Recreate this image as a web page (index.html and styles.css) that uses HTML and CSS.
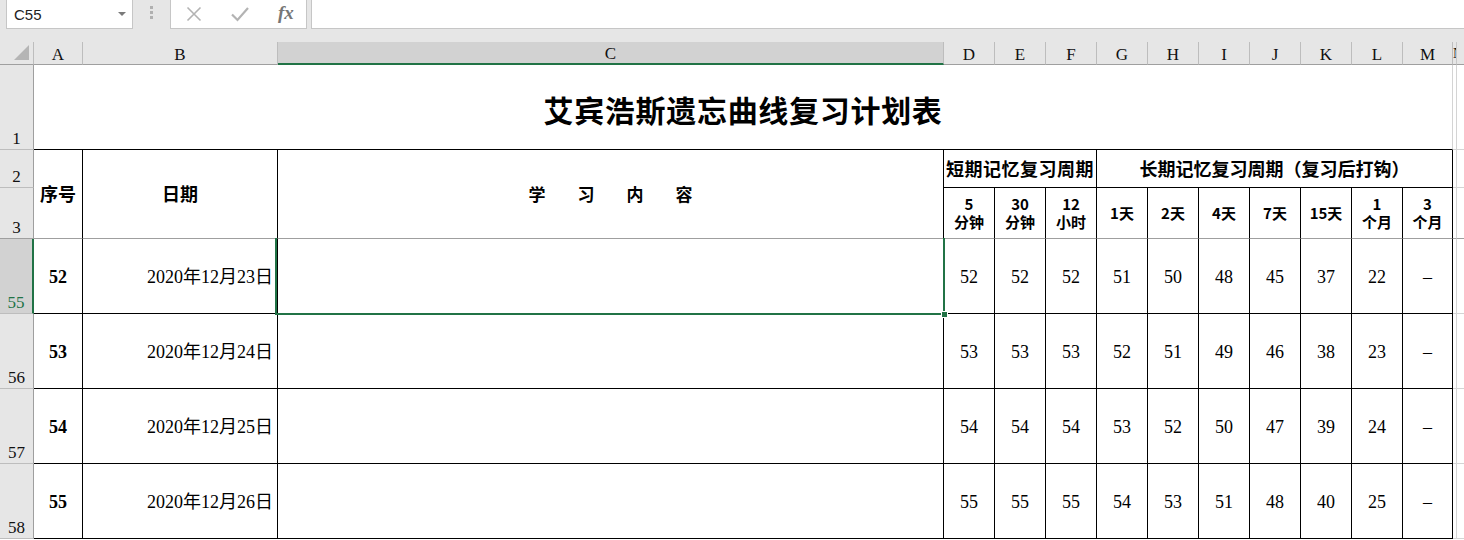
FILE: index.html
```html
<!DOCTYPE html>
<html lang="zh">
<head>
<meta charset="utf-8">
<title>艾宾浩斯遗忘曲线复习计划表</title>
<link rel="stylesheet" href="styles.css">
</head>
<body>
<div class="fbar">
  <div class="namebox"><span class="ref">C55</span><span class="caret"></span></div>
  <div class="dots"><i></i><i></i><i></i></div>
  <div class="btns">
    <svg class="ic-x" width="16" height="16" viewBox="0 0 16 16"><path d="M1.5 1.5L14.5 14.5M14.5 1.5L1.5 14.5" stroke="#b3b3b3" stroke-width="1.6" fill="none"/></svg>
    <svg class="ic-ok" width="18" height="16" viewBox="0 0 18 16"><path d="M1 8.5L6.5 14L17 2" stroke="#b3b3b3" stroke-width="2.2" fill="none"/></svg>
    <span class="fx">fx</span>
  </div>
  <div class="input"></div>
</div>
<div class="band"></div>
<div class="sheet">
  <!-- column headers -->
  <div class="corner"><span class="tri"></span></div>
  <div class="ch">A</div>
  <div class="ch">B</div>
  <div class="ch ch-sel">C</div>
  <div class="ch">D</div>
  <div class="ch">E</div>
  <div class="ch">F</div>
  <div class="ch">G</div>
  <div class="ch">H</div>
  <div class="ch">I</div>
  <div class="ch">J</div>
  <div class="ch">K</div>
  <div class="ch">L</div>
  <div class="ch">M</div>
  <div class="ch ch-n"><span class="nclip">N</span></div>
  <div class="ch ch-o"></div>

  <!-- row 1 -->
  <div class="rh">1</div>
  <div class="title">艾宾浩斯遗忘曲线复习计划表</div>
  <div class="gn"></div>
  <div class="go"></div>

  <!-- row 2 -->
  <div class="rh">2</div>
  <div class="hd hd-a">序号</div>
  <div class="hd hd-b">日期</div>
  <div class="hd hd-c"><span>学</span><span>习</span><span>内</span><span>容</span></div>
  <div class="hd hd-short">短期记忆复习周期</div>
  <div class="hd hd-long">长期记忆复习周期（复习后打钩）</div>
  <div class="gn"></div>
  <div class="go"></div>

  <!-- row 3 -->
  <div class="rh rh-frz">3</div>
  <div class="sub"><span>5</span><span>分钟</span></div>
  <div class="sub"><span>30</span><span>分钟</span></div>
  <div class="sub"><span>12</span><span>小时</span></div>
  <div class="sub"><span>1天</span></div>
  <div class="sub"><span>2天</span></div>
  <div class="sub"><span>4天</span></div>
  <div class="sub"><span>7天</span></div>
  <div class="sub"><span>15天</span></div>
  <div class="sub"><span>1</span><span>个月</span></div>
  <div class="sub"><span>3</span><span>个月</span></div>
  <div class="gn frz"></div>
  <div class="go frz"></div>

  <!-- row 55 -->
  <div class="rh rh-sel">55</div>
  <div class="c idx">52</div>
  <div class="c date">2020年12月23日</div>
  <div class="c cc"><div class="sel"><span class="handle"></span></div></div>
  <div class="c">52</div><div class="c">52</div><div class="c">52</div>
  <div class="c">51</div><div class="c">50</div><div class="c">48</div><div class="c">45</div><div class="c">37</div><div class="c">22</div><div class="c">–</div>
  <div class="gn"></div>
  <div class="go"></div>

  <!-- row 56 -->
  <div class="rh">56</div>
  <div class="c idx">53</div>
  <div class="c date">2020年12月24日</div>
  <div class="c cc"></div>
  <div class="c">53</div><div class="c">53</div><div class="c">53</div>
  <div class="c">52</div><div class="c">51</div><div class="c">49</div><div class="c">46</div><div class="c">38</div><div class="c">23</div><div class="c">–</div>
  <div class="gn"></div>
  <div class="go"></div>

  <!-- row 57 -->
  <div class="rh">57</div>
  <div class="c idx">54</div>
  <div class="c date">2020年12月25日</div>
  <div class="c cc"></div>
  <div class="c">54</div><div class="c">54</div><div class="c">54</div>
  <div class="c">53</div><div class="c">52</div><div class="c">50</div><div class="c">47</div><div class="c">39</div><div class="c">24</div><div class="c">–</div>
  <div class="gn"></div>
  <div class="go"></div>

  <!-- row 58 -->
  <div class="rh">58</div>
  <div class="c idx">55</div>
  <div class="c date">2020年12月26日</div>
  <div class="c cc"></div>
  <div class="c">55</div><div class="c">55</div><div class="c">55</div>
  <div class="c">54</div><div class="c">53</div><div class="c">51</div><div class="c">48</div><div class="c">40</div><div class="c">25</div><div class="c">–</div>
  <div class="gn"></div>
  <div class="go"></div>
</div>
</body>
</html>
```
FILE: styles.css
```css
* { box-sizing: border-box; }
html, body { margin: 0; padding: 0; }
body {
  width: 1464px;
  height: 540px;
  overflow: hidden;
  background: #ffffff;
  font-family: "Liberation Serif", "Noto Sans CJK SC", serif;
  color: #000;
}

/* ---------- formula bar ---------- */
.fbar {
  display: flex;
  height: 29px;
  background: #e6e6e6;
  align-items: stretch;
}
.namebox {
  margin-left: 6px;
  width: 127px;
  background: #fff;
  border: 1px solid #c6c6c6;
  border-top: 0;
  display: flex;
  align-items: center;
  justify-content: space-between;
  padding: 0 6px 0 7px;
  font-family: "Liberation Sans", Arial, sans-serif;
  font-size: 15px;
  color: #222;
}
.caret {
  width: 0; height: 0;
  border-left: 4px solid transparent;
  border-right: 4px solid transparent;
  border-top: 4px solid #7a7a7a;
}
.dots {
  width: 37px;
  display: flex;
  flex-direction: column;
  align-items: center;
  justify-content: center;
  gap: 2px;
  padding-bottom: 4px;
}
.dots i {
  display: block;
  width: 3px; height: 3px;
  background: #b0b0b0;
}
.btns {
  width: 137px;
  background: #fff;
  border: 1px solid #c6c6c6;
  border-top: 0;
  display: flex;
  align-items: center;
  padding-left: 15px;
}
.ic-x { margin-top: -1px; }
.ic-ok { margin-left: 29px; margin-top: -1px; }
.fx {
  margin-left: 29px;
  font-family: "Liberation Serif", serif;
  font-style: italic;
  font-weight: bold;
  font-size: 19px;
  color: #767676;
  margin-top: -3px;
}
.input {
  flex: 1;
  margin-left: 4px;
  background: #fff;
  border: 1px solid #c6c6c6;
  border-top: 0;
  border-right: 0;
}
.band {
  height: 13px;
  background: #e6e6e6;
}

/* ---------- sheet grid ---------- */
.sheet {
  display: grid;
  grid-template-columns: 34px 49px 195px 666px repeat(9, 51px) 50px 4px 1fr;
  grid-template-rows: 23px 85px 38px 51px 75px 75px 75px 75px;
}

.corner {
  background: #e6e6e6;
  border-right: 1px solid #bdbdbd;
  border-bottom: 1px solid #9f9f9f;
  position: relative;
}
.tri {
  position: absolute;
  right: 4px;
  bottom: 4px;
  width: 0; height: 0;
  border-left: 15px solid transparent;
  border-bottom: 15px solid #b5b5b5;
}
.ch {
  background: #e6e6e6;
  border-right: 1px solid #bdbdbd;
  border-bottom: 1px solid #9f9f9f;
  display: flex;
  align-items: center;
  justify-content: center;
  font-size: 17px;
  line-height: 1;
  padding-top: 2px;
  color: #111;
}
.ch-sel {
  background: #d2d2d2;
  border-bottom: 2px solid #217346;
}
.ch-n {
  justify-content: flex-start;
  overflow: hidden;
  padding-left: 0;
  border-right: 1px solid #c8c8c8;
}
.nclip {
  display: block;
  width: 3px;
  overflow: hidden;
  font-size: 14px;
}
.ch-o { border-right: 0; }

.rh {
  background: #e6e6e6;
  border-right: 1px solid #9f9f9f;
  border-bottom: 1px solid #bdbdbd;
  display: flex;
  align-items: flex-end;
  justify-content: center;
  font-size: 17px;
  line-height: 1;
  padding-bottom: 2px;
  color: #111;
}
.rh-frz { border-bottom: 1px solid #9f9f9f; }
.rh-sel {
  background: #d2d2d2;
  color: #217346;
  border-right: 2px solid #217346;
}

.title {
  grid-column: 2 / span 13;
  border-bottom: 1px solid #000;
  border-right: 1px solid #d4d4d4;
  display: flex;
  align-items: center;
  justify-content: center;
  font-family: "Noto Sans CJK SC", sans-serif;
  font-weight: bold;
  font-size: 30px;
  letter-spacing: 0.7px;
  line-height: 1.2;
  padding-top: 4px;
}

.gn {
  border-right: 1px solid #d4d4d4;
  border-bottom: 1px solid #d4d4d4;
}
.go { border-bottom: 1px solid #d4d4d4; }
.frz { border-bottom-color: #9f9f9f; }

.hd {
  display: flex;
  align-items: center;
  justify-content: center;
  font-family: "Noto Sans CJK SC", sans-serif;
  font-weight: bold;
  font-size: 18px;
  line-height: 1.2;
  border-right: 1px solid #000;
}
.hd-a, .hd-b, .hd-c {
  grid-row: span 2;
  border-bottom: 1px solid #9f9f9f;
}
.hd-c {
  font-size: 17px;
  gap: 32px;
}
.hd-short {
  grid-column: span 3;
  border-bottom: 1px solid #000;
  letter-spacing: 0.5px;
}
.hd-long {
  grid-column: span 7;
  border-bottom: 1px solid #000;
}

.sub {
  display: flex;
  flex-direction: column;
  align-items: center;
  justify-content: center;
  text-align: center;
  font-family: "Noto Sans CJK SC", sans-serif;
  font-weight: bold;
  font-size: 15px;
  border-right: 1px solid #000;
  border-bottom: 1px solid #9f9f9f;
}
.sub span {
  display: block;
  height: 18px;
  line-height: 18px;
}

.c {
  display: flex;
  align-items: center;
  justify-content: center;
  font-size: 18px;
  line-height: 1.2;
  border-right: 1px solid #000;
  border-bottom: 1px solid #000;
  padding-top: 3px;
}
.idx { font-weight: bold; }
.date {
  justify-content: flex-end;
  padding-right: 4px;
}
.cc { position: relative; }
.sel {
  position: absolute;
  left: -3px;
  right: -2px;
  top: -1px;
  bottom: -2px;
  border: 2px solid #217346;
  border-top: 0;
  z-index: 2;
}
.handle {
  position: absolute;
  right: -5px;
  bottom: -5px;
  width: 7px;
  height: 7px;
  background: #217346;
  border: 1px solid #fff;
}
```
